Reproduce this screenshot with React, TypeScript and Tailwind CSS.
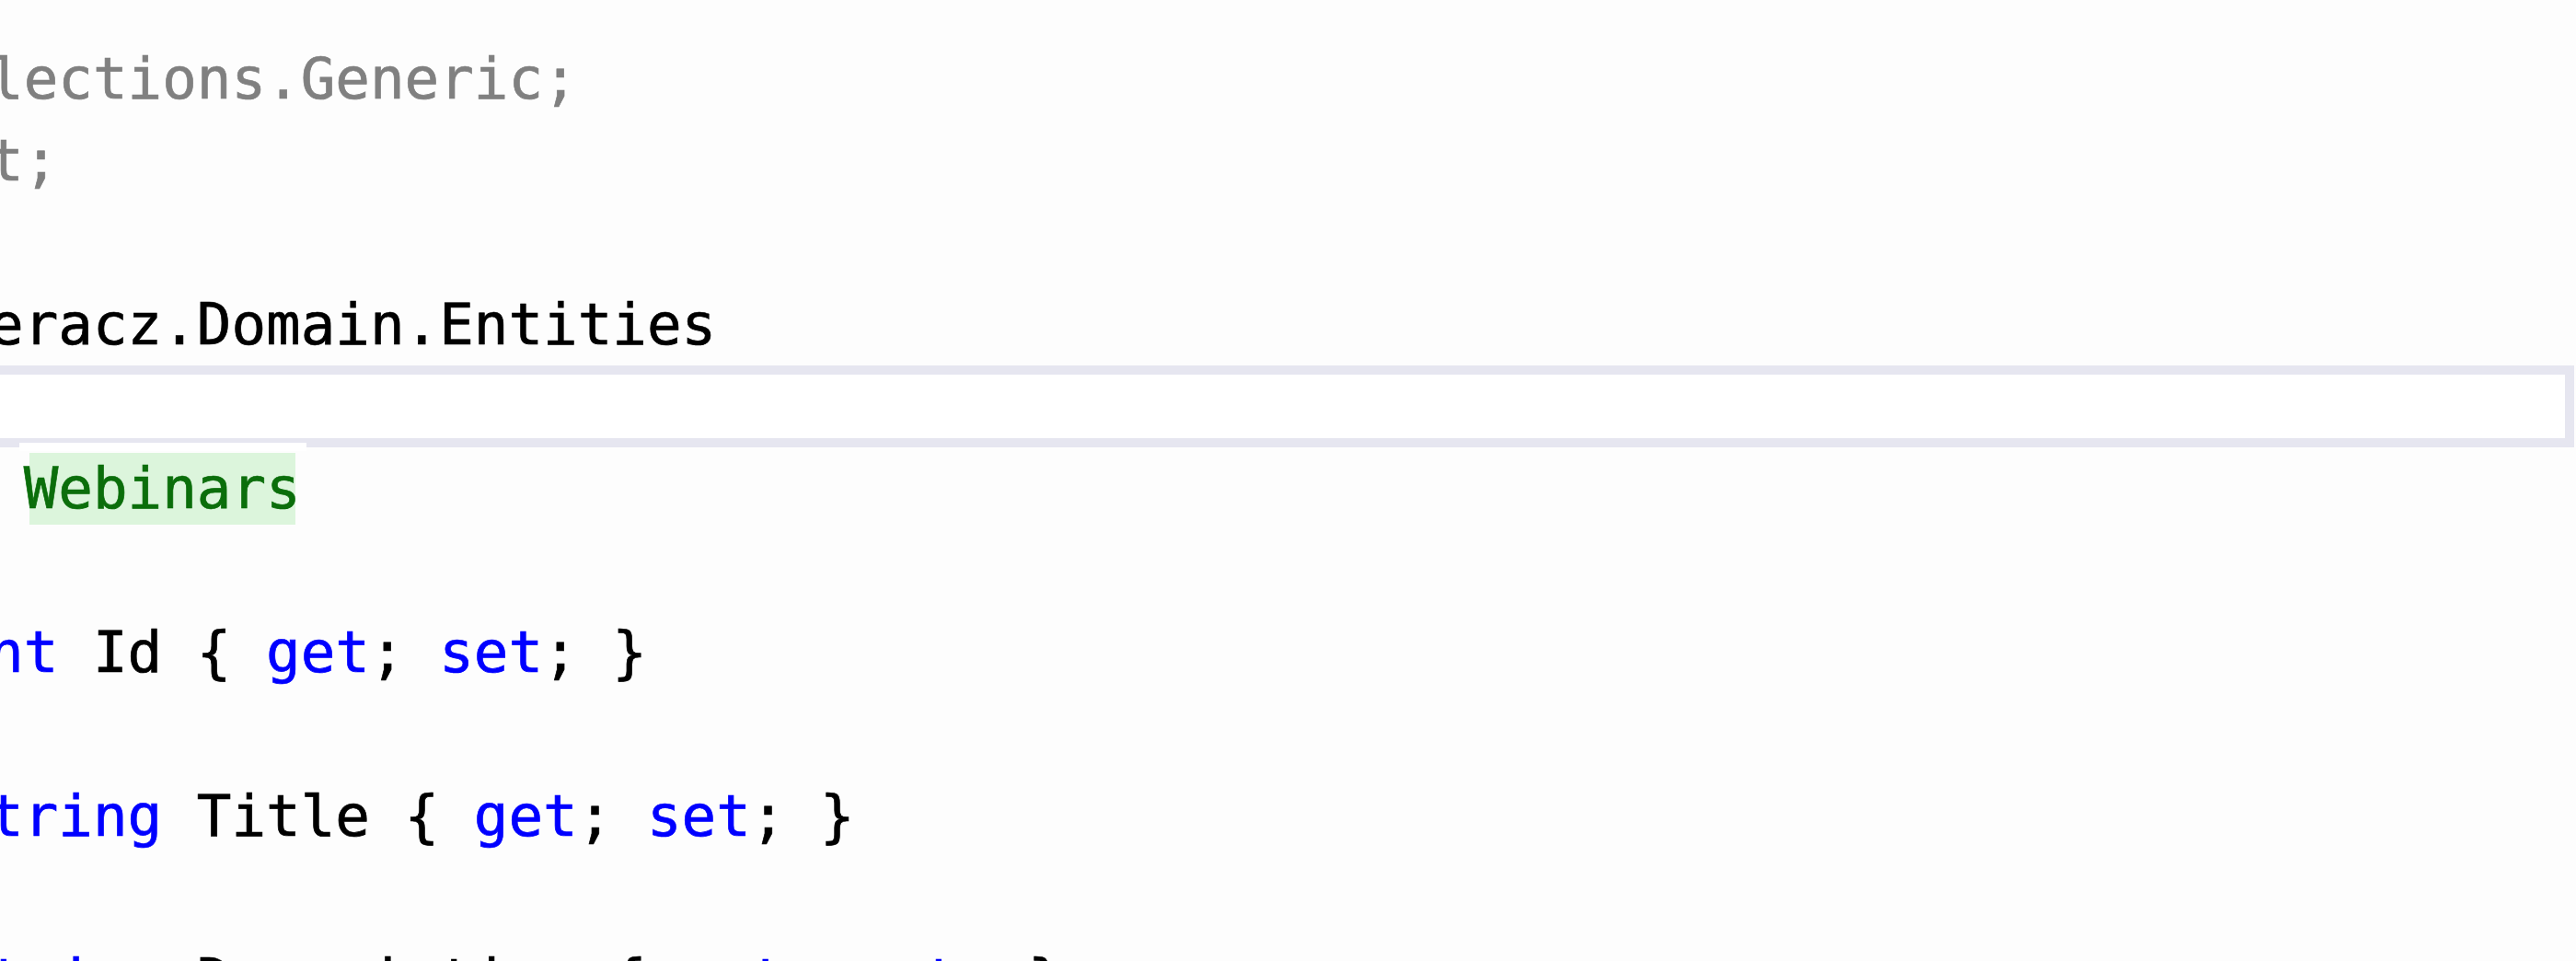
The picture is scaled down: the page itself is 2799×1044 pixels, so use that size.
import React from 'react';

type Tok = { t: string; c?: 'kw' | 'dim' | 'type' | 'txt' };

// Editor is scrolled horizontally: only column 16 onwards is visible.
const lines: Tok[][] = [
    [{ t: 'lections.Generic;', c: 'dim' }],
    [{ t: 't;', c: 'dim' }],
    [],
    [{ t: 'eracz.Domain.Entities' }],
    [],
    [{ t: ' ' }, { t: 'Webinars', c: 'type' }],
    [],
    [{ t: 'nt', c: 'kw' }, { t: ' Id { ' }, { t: 'get', c: 'kw' }, { t: '; ' }, { t: 'set', c: 'kw' }, { t: '; }' }],
    [],
    [{ t: 'tring', c: 'kw' }, { t: ' Title { ' }, { t: 'get', c: 'kw' }, { t: '; ' }, { t: 'set', c: 'kw' }, { t: '; }' }],
    [],
    [{ t: 'tring', c: 'kw' }, { t: ' Description { ' }, { t: 'get', c: 'kw' }, { t: '; ' }, { t: 'set', c: 'kw' }, { t: '; }' }],
];

const CURRENT_LINE = 4;

function Token({ tok }: { tok: Tok }) {
    if (tok.c === 'type') {
        return (
            <span className="relative inline-block leading-[78px] text-[#0b6e0b]">
                {/* reference highlight + its white outline over the current-line frame */}
                <span className="absolute -top-[11px] -left-[5px] right-[-6px] h-[9px] bg-white" />
                <span className="absolute inset-y-0 left-[6px] right-[6px] bg-[#dcf5dc]" />
                <span className="relative">{tok.t}</span>
            </span>
        );
    }
    if (tok.c === 'kw') return <span className="text-[#0000ff]">{tok.t}</span>;
    if (tok.c === 'dim') return <span className="text-[#808080]">{tok.t}</span>;
    return <span className="text-black">{tok.t}</span>;
}

export default function App() {
    return (
        <div className="w-[2799px] h-[1044px] overflow-hidden bg-[#fdfdfd]">
            <div
                className="ml-[-12px] pt-[41px] text-[62.5px] whitespace-pre [-webkit-text-stroke:0.7px]"
                style={{ fontFamily: '"DejaVu Sans Mono", "Liberation Mono", monospace' }}
            >
                {lines.map((line, i) => (
                    <div
                        key={i}
                        className={
                            i === CURRENT_LINE
                                ? 'h-[89px] leading-[69px] mr-[2px] border-y-[10px] border-r-[10px] border-[#e6e6f0] bg-white'
                                : 'h-[89px] leading-[81px] flex items-center'
                        }
                    >
                        {line.map((tok, j) => (
                            <Token key={j} tok={tok} />
                        ))}
                    </div>
                ))}
            </div>
        </div>
    );
}
